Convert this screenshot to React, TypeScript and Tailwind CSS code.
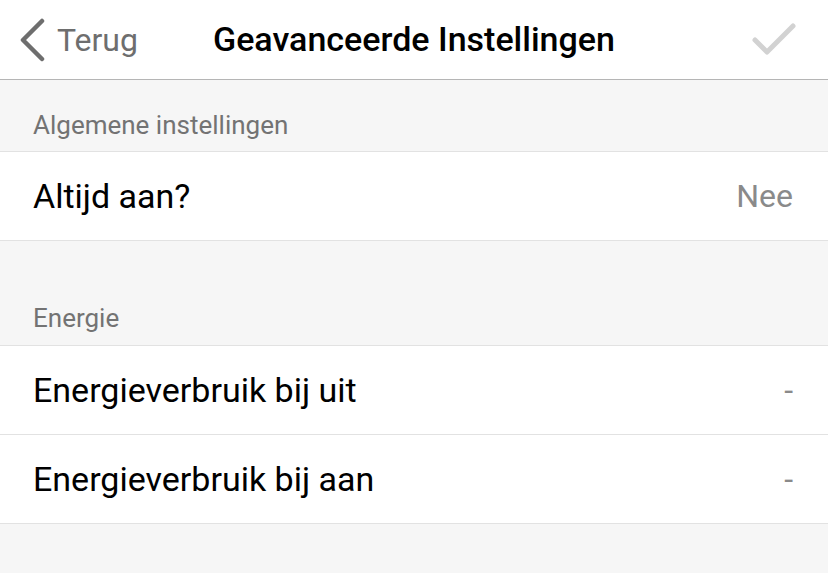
import React from "react";

function Row({ label, value }: { label: string; value: string }) {
  return (
    <div className="flex h-[89px] items-center justify-between border-b border-[#e2e2e2] bg-white pl-[33px] pr-[35px]">
      <span className="text-[34px] text-black">{label}</span>
      <span className="text-[32px] text-[#8a8a8a]">{value}</span>
    </div>
  );
}

export default function App() {
  return (
    <div className="h-[573px] w-[828px] overflow-hidden bg-[#f6f6f6]" style={{ fontFamily: "Roboto, 'Noto Sans', sans-serif" }}>
      <div className="relative flex h-[80px] items-center border-b border-[#b5b5b5] bg-white">
        <div className="flex items-center pl-[18px]">
          <svg width="28" height="44" viewBox="0 0 28 44" className="mr-[11px]">
            <path d="M24 3 L5 22 L24 41" fill="none" stroke="#6e6e6e" strokeWidth="4.5" strokeLinecap="round" strokeLinejoin="round" />
          </svg>
          <span className="text-[32px] text-[#6e6e6e]">Terug</span>
        </div>
        <span className="absolute left-[213px] text-[34px] font-medium text-black">Geavanceerde Instellingen</span>
        <svg width="46" height="34" viewBox="0 0 46 34" className="ml-auto mr-[31px]">
          <path d="M4 17 L16 29 L42 3" fill="none" stroke="#d2d2d2" strokeWidth="5" strokeLinecap="round" strokeLinejoin="round" />
        </svg>
      </div>
      <div className="flex h-[72px] items-end border-b border-[#e2e2e2] pb-[6px] pl-[33px]">
        <span className="text-[26px] text-[#737373]">Algemene instellingen</span>
      </div>
      <Row label="Altijd aan?" value="Nee" />
      <div className="flex h-[105px] items-end border-b border-[#e2e2e2] pb-[7px] pl-[33px]">
        <span className="text-[26px] text-[#737373]">Energie</span>
      </div>
      <Row label="Energieverbruik bij uit" value="-" />
      <Row label="Energieverbruik bij aan" value="-" />
    </div>
  );
}
